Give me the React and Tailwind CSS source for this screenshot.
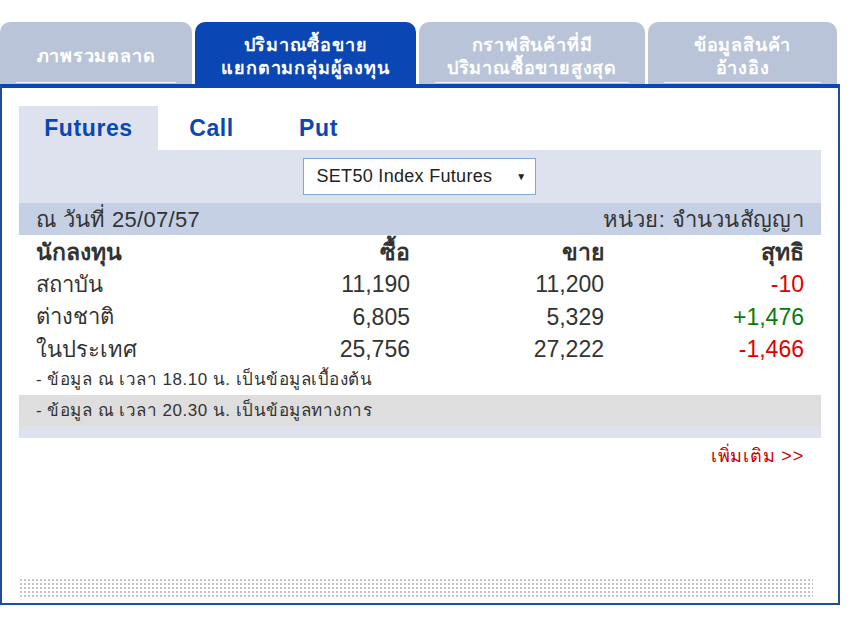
import React from "react";

const mainTabs = [
  { lines: ["ภาพรวมตลาด"], w: "w-[192px]", active: false },
  { lines: ["ปริมาณซื้อขาย", "แยกตามกลุ่มผู้ลงทุน"], w: "w-[221px]", active: true },
  { lines: ["กราฟสินค้าที่มี", "ปริมาณซื้อขายสูงสุด"], w: "w-[226px]", active: false },
  { lines: ["ข้อมูลสินค้า", "อ้างอิง"], w: "w-[189px]", active: false },
];

const rows = [
  { name: "สถาบัน", buy: "11,190", sell: "11,200", net: "-10", color: "text-[#e00000]" },
  { name: "ต่างชาติ", buy: "6,805", sell: "5,329", net: "+1,476", color: "text-[#0a7a0a]" },
  { name: "ในประเทศ", buy: "25,756", sell: "27,222", net: "-1,466", color: "text-[#e00000]" },
];

export default function App() {
  return (
    <div className="w-[854px] h-[621px] bg-white font-['Liberation_Sans','Noto_Sans',sans-serif] text-[#333]">
      {/* Top tabs */}
      <div className="flex gap-[3px] pt-[22px] w-[840px]">
        {mainTabs.map((t, i) => (
          <div
            key={i}
            className={`${t.w} h-[62px] pt-[7px] rounded-t-[10px] flex flex-col items-center justify-center relative text-[18px] font-bold leading-[23px] tracking-[0.8px] text-white ${
              t.active ? "bg-[#0b47b4] h-[66px] -mb-[4px] pb-[4px]" : "bg-[#bac4d9]"
            }`}
          >
            {t.lines.map((l) => (
              <span key={l}>{l}</span>
            ))}
            {!t.active && (
              <span className="absolute bottom-[1px] left-[16px] right-[16px] h-px bg-[#eef1f7]" />
            )}
          </div>
        ))}
      </div>

      {/* Panel */}
      <div className="w-[840px] h-[521px] border-t-4 border-t-[#0b47b4] border-x-2 border-b-2 border-[#1f4e9a] px-[17px] pt-[18px]">
        {/* Sub tabs */}
        <div className="flex h-[44px] text-[23px] font-bold tracking-[0.6px] text-[#0b47b4]">
          <div className="w-[139px] bg-[#dde2ee] flex items-center justify-center">Futures</div>
          <div className="w-[107px] flex items-center justify-center">Call</div>
          <div className="w-[107px] flex items-center justify-center">Put</div>
        </div>

        {/* Select bar */}
        <div className="h-[53px] bg-[#dde2ee] flex items-center justify-center pr-[2px]">
          <div className="w-[233px] h-[37px] bg-white border border-[#7fa7d6] flex items-center justify-between pl-[13px] pr-[8px] text-[18px] tracking-[0.3px] text-[#222]">
            <span>SET50 Index Futures</span>
            <span className="text-[10px] text-[#222]">▼</span>
          </div>
        </div>

        {/* Date row */}
        <div className="h-[32px] bg-[#c5d0e5] flex items-center justify-between px-[17px] text-[22px] tracking-[0.3px] text-[#333]">
          <span>ณ วันที่ 25/07/57</span>
          <span>หน่วย: จำนวนสัญญา</span>
        </div>

        {/* Table */}
        <div className="px-[17px] text-[23px]">
          <div className="grid grid-cols-[180px_194px_194px_1fr] h-[32px] items-center font-bold">
            <span>นักลงทุน</span>
            <span className="text-right">ซื้อ</span>
            <span className="text-right">ขาย</span>
            <span className="text-right">สุทธิ</span>
          </div>
          {rows.map((r) => (
            <div key={r.name} className="grid grid-cols-[180px_194px_194px_1fr] h-[32.5px] items-center">
              <span className="text-[22px]">{r.name}</span>
              <span className="text-right">{r.buy}</span>
              <span className="text-right">{r.sell}</span>
              <span className={`text-right ${r.color}`}>{r.net}</span>
            </div>
          ))}
        </div>

        {/* Notes */}
        <div className="h-[30px] flex items-center px-[17px] text-[17px] tracking-[0.5px]">
          - ข้อมูล ณ เวลา 18.10 น. เป็นข้อมูลเบื้องต้น
        </div>
        <div className="h-[32px] bg-[#dedede] flex items-center px-[17px] text-[17px] tracking-[0.5px]">
          - ข้อมูล ณ เวลา 20.30 น. เป็นข้อมูลทางการ
        </div>
        <div className="h-[11px] bg-[#dde2ee]" />

        <div className="flex justify-end pr-[17px] pt-[5px] text-[18px] tracking-[0.8px] text-[#c80000]">
          เพิ่มเติม &gt;&gt;
        </div>

        {/* Dotted band */}
        <div className="mt-[108px] mr-[8px] h-[19px] bg-[radial-gradient(circle,#c4c4c4_0.8px,transparent_1.2px)] bg-[length:4px_4px]" />
      </div>
    </div>
  );
}
